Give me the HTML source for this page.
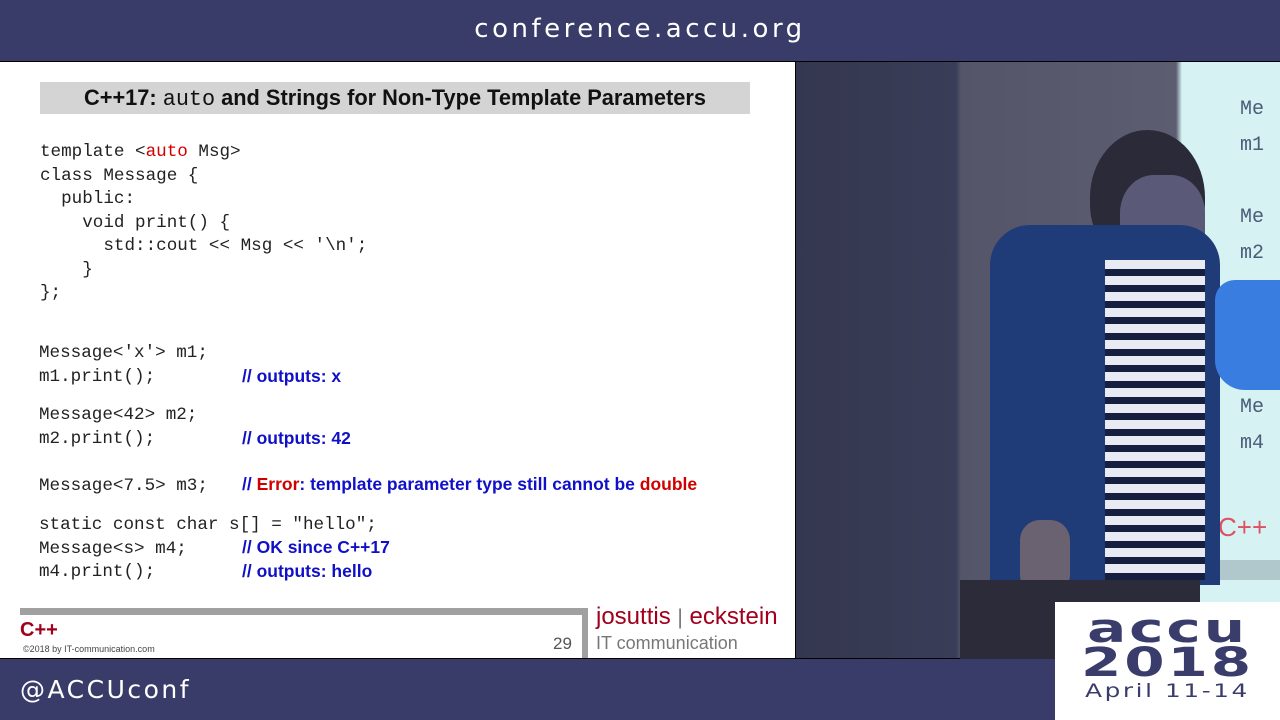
<!DOCTYPE html>
<html><head><meta charset="utf-8"><style>
*{margin:0;padding:0;box-sizing:border-box}
body{width:1280px;height:720px;position:relative;overflow:hidden;background:#000;font-family:"Liberation Sans",sans-serif}
.abs{position:absolute}
.top{left:0;top:0;width:1280px;height:61px;background:#393c69}
.bot{left:0;top:659px;width:1280px;height:61px;background:#393c69}
.slide{left:0;top:62px;width:795px;height:596px;background:#fff}
.code{font-family:"Liberation Mono",monospace;font-size:17.6px;color:#222;white-space:pre;position:absolute;left:40px;line-height:23.5px}
.cm{font-family:"Liberation Sans",sans-serif;font-size:17.5px;font-weight:bold;color:#1010c8;position:absolute;left:242px;white-space:pre}
.red{color:#d00000}
</style></head><body>
<div class="abs top"></div>
<div class="abs" style="left:0;top:14px;width:1280px;text-align:center;color:#fff;font-size:26px;letter-spacing:3.5px;font-family:'DejaVu Sans',sans-serif">conference.accu.org</div>
<div class="abs slide"></div>
<div class="abs" style="left:40px;top:82px;width:710px;height:32px;background:#d4d4d4;text-align:center;font-weight:bold;font-size:21.8px;line-height:32px;color:#111">C++17: <span style="font-family:'Liberation Mono',monospace;font-weight:normal">auto</span> and Strings for Non-Type Template Parameters</div>
<div class="code" style="top:141px">template &lt;<span class="red">auto</span> Msg&gt;
class Message {
  public:
    void print() {
      std::cout &lt;&lt; Msg &lt;&lt; '\n';
    }
};</div>
<div class="code" style="top:342px;left:39px">Message&lt;'x'&gt; m1;
m1.print();</div>
<div class="cm" style="top:366px">// outputs: x</div>
<div class="code" style="top:404px;left:39px">Message&lt;42&gt; m2;
m2.print();</div>
<div class="cm" style="top:428px">// outputs: 42</div>
<div class="code" style="top:475px;left:39px">Message&lt;7.5&gt; m3;</div>
<div class="cm" style="top:474px">// <span class="red">Error</span>: template parameter type still cannot be <span class="red">double</span></div>
<div class="code" style="top:514px;left:39px">static const char s[] = "hello";
Message&lt;s&gt; m4;
m4.print();</div>
<div class="cm" style="top:537px">// OK since C++17</div>
<div class="cm" style="top:561px">// outputs: hello</div>
<div class="abs" style="left:20px;top:608px;width:568px;height:7px;background:#a0a0a0"></div>
<div class="abs" style="left:582px;top:608px;width:6px;height:50px;background:#a0a0a0"></div>
<div class="abs" style="left:20px;top:619px;color:#a0001c;font-weight:bold;font-size:20px">C++</div>
<div class="abs" style="left:23px;top:644px;color:#444;font-size:9px">©2018 by IT-communication.com</div>
<div class="abs" style="left:553px;top:634px;color:#555;font-size:17px">29</div>
<div class="abs" style="left:596px;top:603px;color:#a0001c;font-size:24px">josuttis <span style="color:#777;font-size:21px">|</span> eckstein</div>
<div class="abs" style="left:596px;top:633px;color:#777;font-size:18px">IT communication</div>
<div class="abs" style="left:796px;top:62px;width:484px;height:596px;background:linear-gradient(90deg,#34374f 0,#3a3d57 160px,#545569 165px,#5c5d70 380px,#d6f2f2 386px)"></div>
<div class="abs" style="left:1182px;top:560px;width:98px;height:20px;background:#b0c8cc"></div>
<div class="abs" style="left:1240px;top:92px;font-family:'Liberation Mono',monospace;font-size:20px;color:#4a5d7a;line-height:36px;white-space:pre">Me
m1

Me
m2</div>
<div class="abs" style="left:1240px;top:390px;font-family:'Liberation Mono',monospace;font-size:20px;color:#4a5d7a;line-height:36px;white-space:pre">Me
m4</div>
<div class="abs" style="left:1218px;top:512px;color:#e05060;font-size:26px">C++</div>
<div class="abs" style="left:1090px;top:130px;width:115px;height:135px;border-radius:50% 50% 45% 45%;background:#2a2a38"></div>
<div class="abs" style="left:1120px;top:175px;width:85px;height:95px;border-radius:40%;background:#5a5a78"></div>
<div class="abs" style="left:990px;top:225px;width:230px;height:360px;border-radius:40px 40px 0 0;background:#1f3c78"></div>
<div class="abs" style="left:1105px;top:260px;width:100px;height:320px;background:repeating-linear-gradient(180deg,#e8ecf2 0 9px,#152040 9px 16px)"></div>
<div class="abs" style="left:1215px;top:280px;width:65px;height:110px;background:#3a7de0;border-radius:20px 0 0 30px"></div>
<div class="abs" style="left:1020px;top:520px;width:50px;height:75px;background:#6a6270;border-radius:20px"></div>
<div class="abs" style="left:960px;top:580px;width:240px;height:80px;background:#2b2b3a"></div>
<div class="abs bot"></div>
<div class="abs" style="left:20px;top:675px;color:#fff;font-size:25px;letter-spacing:2.5px;font-family:'DejaVu Sans',sans-serif">@ACCUconf</div>
<div class="abs" style="left:1055px;top:602px;width:225px;height:118px;background:#fff"></div>
<div class="abs" style="left:1055px;top:612px;width:225px;transform:scaleX(1.45);text-align:center;color:#3a3d6b;font-family:'DejaVu Sans',sans-serif;font-weight:bold;font-size:40px;line-height:34px;letter-spacing:2px">accu<br>2018</div>
<div class="abs" style="left:1055px;top:680px;width:225px;transform:scaleX(1.3);text-align:center;color:#3a3d6b;font-family:'DejaVu Sans',sans-serif;font-size:19px;letter-spacing:2px">April 11-14</div>
</body></html>
